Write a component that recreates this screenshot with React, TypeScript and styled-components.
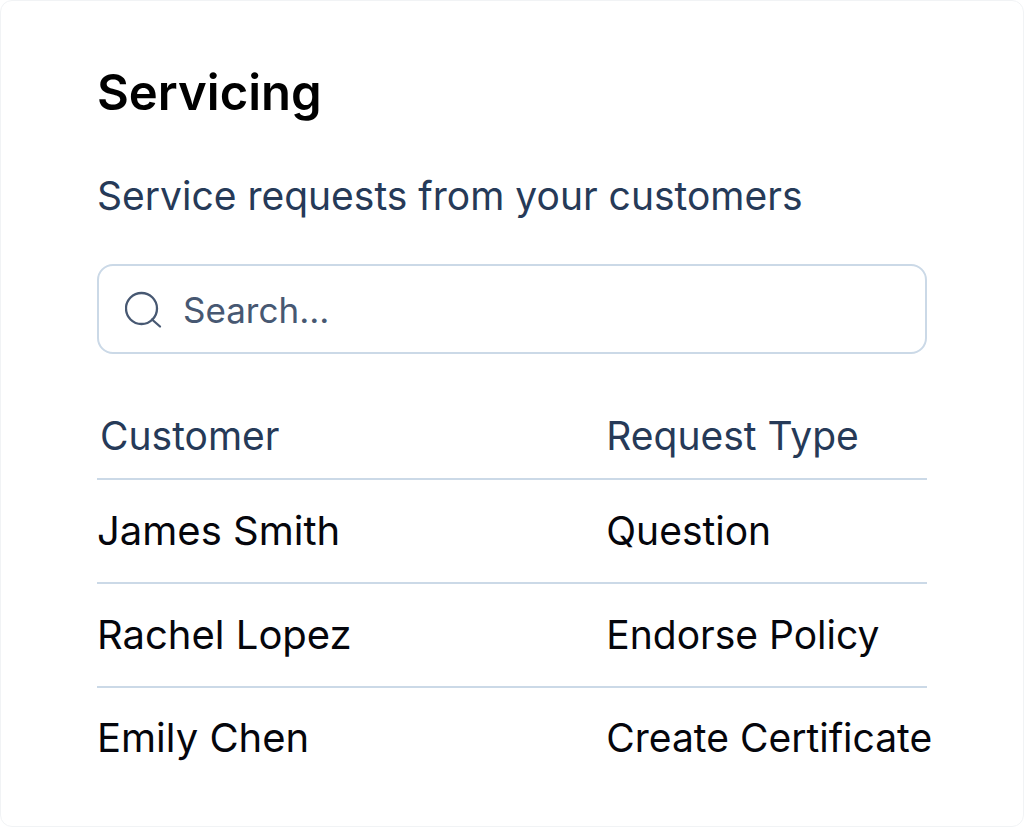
import React from "react";
import styled, { createGlobalStyle } from "styled-components";

const GlobalStyle = createGlobalStyle`
  *, *::before, *::after { box-sizing: border-box; }
  body { margin: 0; background: #ffffff; font-family: Inter, "Liberation Sans", sans-serif; }
`;

const Card = styled.main`
  min-height: 100vh;
  padding: 62px 96px 32px;
  background: #ffffff;
  border: 1px solid #f1f3f5;
  border-radius: 12px;
`;

const Title = styled.h1`
  margin: 0;
  font-size: 49px;
  line-height: 60px;
  font-weight: 600;
  color: #000000;
`;

const Subtitle = styled.p`
  margin: 49px 0 0;
  font-size: 39px;
  line-height: 48px;
  color: #263a58;
`;

const SearchField = styled.label`
  display: flex;
  align-items: center;
  gap: 20px;
  height: 90px;
  margin-top: 44px;
  padding: 2px 26px 0;
  border: 2px solid #cbd9e7;
  border-radius: 16px;
  color: #475872;
`;

const SearchInput = styled.input`
  flex: 1;
  min-width: 0;
  padding: 0;
  border: 0;
  outline: 0;
  background: transparent;
  font-family: inherit;
  font-size: 35px;
  line-height: 48px;
  color: #475872;
  &::placeholder { color: #475872; opacity: 1; }
`;

const Table = styled.table`
  width: 100%;
  margin-top: 39px;
  border-collapse: collapse;
  table-layout: fixed;
`;

const HeadCell = styled.th`
  height: 86px;
  padding: 0 0 0 3px;
  text-align: left;
  font-size: 39px;
  line-height: 48px;
  font-weight: 400;
  color: #263a58;
  white-space: nowrap;
  border-bottom: 2px solid #cbd9e7;
  &:first-child { width: 61%; }
`;

const Cell = styled.td<{ $name?: boolean }>`
  height: 104px;
  padding: 0 0 0 ${(p) => (p.$name ? 0 : 3)}px;
  font-size: ${(p) => (p.$name ? 40 : 39)}px;
  line-height: 48px;
  color: #05060c;
  white-space: nowrap;
  border-bottom: 2px solid #cbd9e7;
  tr:last-child > & { height: 100px; border-bottom: 0; }
`;

const requests = [
  { customer: "James Smith", type: "Question" },
  { customer: "Rachel Lopez", type: "Endorse Policy" },
  { customer: "Emily Chen", type: "Create Certificate" },
];

function SearchIcon() {
  return (
    <svg width="38" height="38" viewBox="0 0 38 38" fill="none" stroke="currentColor" strokeWidth="2.3" strokeLinecap="round" aria-hidden="true">
      <circle cx="16.5" cy="17.5" r="15.5" />
      <path d="M27 28.5l8 7" />
    </svg>
  );
}

export default function App() {
  return (
    <>
      <GlobalStyle />
      <Card>
        <Title>Servicing</Title>
        <Subtitle>Service requests from your customers</Subtitle>
        <SearchField>
          <SearchIcon />
          <SearchInput type="text" placeholder="Search..." aria-label="Search" />
        </SearchField>
        <Table>
          <thead>
            <tr>
              <HeadCell scope="col">Customer</HeadCell>
              <HeadCell scope="col">Request Type</HeadCell>
            </tr>
          </thead>
          <tbody>
            {requests.map((r) => (
              <tr key={r.customer}>
                <Cell $name>{r.customer}</Cell>
                <Cell>{r.type}</Cell>
              </tr>
            ))}
          </tbody>
        </Table>
      </Card>
    </>
  );
}
